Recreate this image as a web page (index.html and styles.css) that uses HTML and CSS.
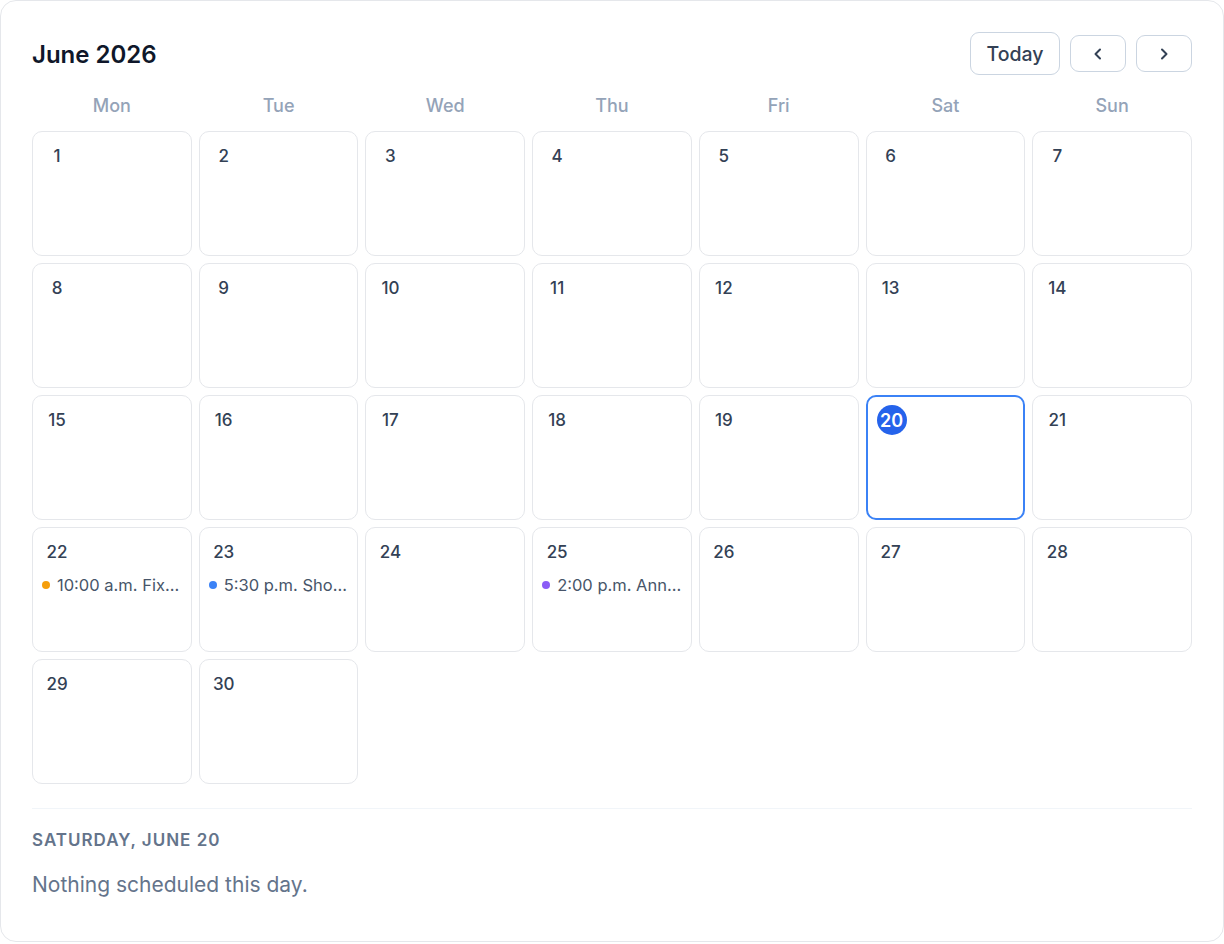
FILE: index.html
```html
<!DOCTYPE html>
<html>
<head>
<meta charset="utf-8">
<link rel="stylesheet" href="styles.css">
</head>
<body>
<div class="card">
  <div class="header">
    <h1 class="title">June 2026</h1>
    <div class="nav">
      <button class="btn btn-today">Today</button>
      <button class="btn btn-arrow" aria-label="Previous month"><svg width="16" height="16" viewBox="0 0 16 16"><path d="M10 3.5 L5.5 8 L10 12.5" fill="none" stroke="#334155" stroke-width="2" stroke-linecap="round" stroke-linejoin="round"/></svg></button>
      <button class="btn btn-arrow" aria-label="Next month"><svg width="16" height="16" viewBox="0 0 16 16"><path d="M6 3.5 L10.5 8 L6 12.5" fill="none" stroke="#334155" stroke-width="2" stroke-linecap="round" stroke-linejoin="round"/></svg></button>
    </div>
  </div>
  <div class="weekdays">
    <div>Mon</div><div>Tue</div><div>Wed</div><div>Thu</div><div>Fri</div><div>Sat</div><div>Sun</div>
  </div>
  <div class="grid">
    <div class="day"><span class="num">1</span></div>
    <div class="day"><span class="num">2</span></div>
    <div class="day"><span class="num">3</span></div>
    <div class="day"><span class="num">4</span></div>
    <div class="day"><span class="num">5</span></div>
    <div class="day"><span class="num">6</span></div>
    <div class="day"><span class="num">7</span></div>
    <div class="day"><span class="num">8</span></div>
    <div class="day"><span class="num">9</span></div>
    <div class="day"><span class="num">10</span></div>
    <div class="day"><span class="num">11</span></div>
    <div class="day"><span class="num">12</span></div>
    <div class="day"><span class="num">13</span></div>
    <div class="day"><span class="num">14</span></div>
    <div class="day"><span class="num">15</span></div>
    <div class="day"><span class="num">16</span></div>
    <div class="day"><span class="num">17</span></div>
    <div class="day"><span class="num">18</span></div>
    <div class="day"><span class="num">19</span></div>
    <div class="day today"><span class="num">20</span></div>
    <div class="day"><span class="num">21</span></div>
    <div class="day"><span class="num">22</span>
      <div class="event"><span class="dot dot-orange"></span><span class="ev-text">10:00 a.m. Fix...</span></div>
    </div>
    <div class="day"><span class="num">23</span>
      <div class="event"><span class="dot dot-blue"></span><span class="ev-text">5:30 p.m. Sho...</span></div>
    </div>
    <div class="day"><span class="num">24</span></div>
    <div class="day"><span class="num">25</span>
      <div class="event"><span class="dot dot-purple"></span><span class="ev-text">2:00 p.m. Ann...</span></div>
    </div>
    <div class="day"><span class="num">26</span></div>
    <div class="day"><span class="num">27</span></div>
    <div class="day"><span class="num">28</span></div>
    <div class="day"><span class="num">29</span></div>
    <div class="day"><span class="num">30</span></div>
  </div>
  <div class="detail">
    <div class="detail-date">Saturday, June 20</div>
    <p class="detail-empty">Nothing scheduled this day.</p>
  </div>
</div>
</body>
</html>
```

FILE: styles.css
```css
* { box-sizing: border-box; }
html, body { margin: 0; padding: 0; background: #ffffff; }
body { font-family: Inter, "Noto Sans", "Liberation Sans", sans-serif; }

.card {
  width: 1224px;
  border: 1px solid #e5e7eb;
  border-radius: 16px;
  padding: 31px 31px 31px;
  background: #ffffff;
}

.header {
  display: flex;
  align-items: center;
  justify-content: space-between;
  height: 43px;
}
.title {
  margin: 0;
  font-size: 24px;
  line-height: 30px;
  font-weight: 600;
  color: #0f172a;
  padding-top: 2px;
}
.nav { display: flex; align-items: center; gap: 10px; }
.btn {
  font-family: inherit;
  background: #ffffff;
  border: 1px solid #cbd5e1;
  border-radius: 9px;
  color: #334155;
  display: flex;
  align-items: center;
  justify-content: center;
  padding: 0;
  cursor: pointer;
}
.btn-today {
  width: 90px;
  height: 43px;
  font-size: 19.5px;
  font-weight: 500;
}
.btn-arrow {
  width: 56px;
  height: 37px;
}

.weekdays {
  display: grid;
  grid-template-columns: repeat(7, 1fr);
  column-gap: 7px;
  margin-top: 17px;
  height: 28px;
  line-height: 28px;
  text-align: center;
  font-size: 18px;
  font-weight: 500;
  color: #94a3b8;
}

.grid {
  display: grid;
  grid-template-columns: repeat(7, 1fr);
  grid-auto-rows: 125px;
  gap: 7px;
  margin-top: 11px;
}
.day {
  border: 1px solid #e5e7eb;
  border-radius: 10px;
  padding: 9px 9px 8px;
  min-width: 0;
  overflow: hidden;
}
.day.today {
  border: 2px solid #3b82f6;
  padding: 8px 8px 7px;
}
.num {
  display: flex;
  align-items: center;
  justify-content: center;
  width: 30px;
  height: 30px;
  border-radius: 50%;
  font-size: 17px;
  font-weight: 500;
  color: #334155;
}
.today .num {
  margin: 0 0 0 1px;
  background: #2563eb;
  color: #ffffff;
  font-weight: 600;
  font-size: 18px;
}
.event {
  display: flex;
  align-items: center;
  gap: 7px;
  margin-top: 8px;
  height: 20px;
  min-width: 0;
}
.dot {
  flex: 0 0 8px;
  width: 8px;
  height: 8px;
  border-radius: 50%;
}
.dot-orange { background: #f59e0b; }
.dot-blue { background: #3b82f6; }
.dot-purple { background: #8b5cf6; }
.ev-text {
  font-size: 16.5px;
  color: #475569;
  white-space: nowrap;
  overflow: hidden;
  min-width: 0;
}

.detail {
  margin-top: 24px;
  border-top: 1px solid #f1f5f9;
  padding-top: 19px;
}
.detail-date {
  font-size: 17px;
  line-height: 24px;
  font-weight: 600;
  text-transform: uppercase;
  letter-spacing: 1px;
  color: #64748b;
}
.detail-empty {
  margin: 19px 0 11px;
  font-size: 21px;
  line-height: 28px;
  color: #64748b;
}
```
